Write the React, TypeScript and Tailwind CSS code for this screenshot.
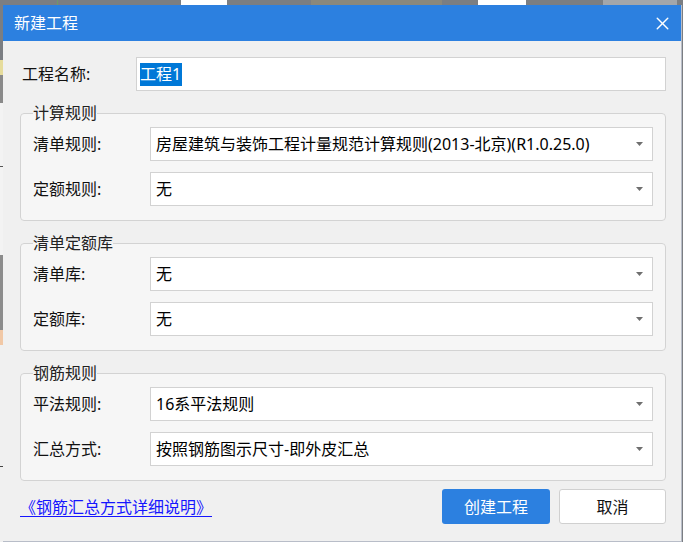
import { X } from "lucide-react";

const font = "font-['Noto_Sans','Noto_Sans_CJK_SC',sans-serif]";

function Caret() {
  return (
    <svg width="7" height="4" viewBox="0 0 7 4" className="shrink-0">
      <path d="M0 0H7L3.5 4Z" fill="#6f6f6f" />
    </svg>
  );
}

function Select({ value }: { value: string }) {
  return (
    <div className="flex-1 h-[34px] bg-white border border-[#d2d2d2] flex items-center justify-between pl-[5px] pr-[9px]">
      <span className="text-[16px] leading-[20px] text-black">{value}</span>
      <Caret />
    </div>
  );
}

function Row({ label, value }: { label: string; value: string }) {
  return (
    <div className="flex items-center">
      <span className="w-[117px] shrink-0 text-[16px] leading-[20px] text-[#111]">{label}</span>
      <Select value={value} />
    </div>
  );
}

function Group({ title, rows }: { title: string; rows: [string, string][] }) {
  return (
    <fieldset className="border border-[#d3d3d3] rounded-[4px] bg-[#f6f6f6] px-3 pt-1 pb-[14px]">
      <legend className="text-[16px] leading-[20px] text-[#222]">{title}</legend>
      <div className="flex flex-col gap-[11px]">
        {rows.map(([l, v]) => (
          <Row key={l} label={l} value={v} />
        ))}
      </div>
    </fieldset>
  );
}

export default function App() {
  return (
    <div className={`w-[683px] h-[542px] bg-[#7b7e82] flex flex-col overflow-hidden ${font}`}>
      {/* app behind the dialog */}
      <div className="h-[5px] shrink-0 flex">
        <div className="w-[57px] bg-[#7b7e82]" />
        <div className="w-[1px] bg-[#6e9a6a]" />
        <div className="w-[123px] bg-[#7b7e82]" />
        <div className="w-[46px] bg-white" />
        <div className="w-[84px] bg-[#7b7e82]" />
        <div className="w-[131px] bg-[#8a887c]" />
        <div className="w-[36px] bg-[#7b7e82]" />
        <div className="w-[48px] bg-white" />
        <div className="w-[77px] bg-[#7b7e82]" />
        <div className="w-[74px] bg-[#a3a6aa]" />
        <div className="flex-1 bg-[#7b7e82]" />
      </div>

      <div className="flex flex-1">
        <div className="w-[3px] shrink-0 flex flex-col">
          <div className="h-[55px] bg-[#7b7e82]" />
          <div className="h-[15px] bg-[#e6dc9c]" />
          <div className="h-[28px] bg-[#8a8a8a]" />
          <div className="h-[63px] bg-[#f3f3f3]" />
          <div className="h-[1px] bg-[#555]" />
          <div className="h-[88px] bg-[#f3f3f3]" />
          <div className="h-[75px] bg-[#8c8c8c]" />
          <div className="h-[15px] bg-[#f1c8a6]" />
          <div className="h-[121px] bg-[#f0f0f0]" />
          <div className="h-[1px] bg-[#444]" />
          <div className="flex-1 bg-[#f0f0f0]" />
        </div>

        <div className="w-[679px] shrink-0 flex flex-col bg-[#f0f0f0] border-r border-b border-[#b8bdc8]">
          <div className="h-[36px] shrink-0 bg-[#2c80e0] flex items-center justify-between pl-[11px] pr-[8px]">
            <span className="text-white text-[16px] leading-[20px]">新建工程</span>
            <X className="size-[21px] text-white" strokeWidth={1.6} />
          </div>

          <div className="flex-1 flex flex-col gap-3 pt-4 pl-[17px] pr-[15px]">
            <div className="flex items-center">
              <span className="w-[116px] shrink-0 pl-[2px] text-[16px] leading-[20px] text-[#111]">工程名称:</span>
              <div className="flex-1 h-[34px] bg-white border border-[#d2d2d2] flex items-center pl-[3px]">
                <span className="bg-[#0078d7] text-white text-[16px] leading-[23px] pr-[1px]">工程1</span>
              </div>
            </div>

            <Group
              title="计算规则"
              rows={[
                ["清单规则:", "房屋建筑与装饰工程计量规范计算规则(2013-北京)(R1.0.25.0)"],
                ["定额规则:", "无"],
              ]}
            />
            <Group
              title="清单定额库"
              rows={[
                ["清单库:", "无"],
                ["定额库:", "无"],
              ]}
            />
            <Group
              title="钢筋规则"
              rows={[
                ["平法规则:", "16系平法规则"],
                ["汇总方式:", "按照钢筋图示尺寸-即外皮汇总"],
              ]}
            />

            <div className="flex items-center justify-between -mt-1">
              <a href="#" className="text-[16px] leading-[20px] text-[#1515ff] underline underline-offset-[3px]">
                《钢筋汇总方式详细说明》
              </a>
              <div className="flex gap-[9px]">
                <button className="w-[108px] h-[35px] rounded-[3px] bg-[#2c80e0] text-white text-[16px]">创建工程</button>
                <button className="w-[107px] h-[35px] rounded-[3px] bg-white border border-[#d0d0d0] text-[#111] text-[16px]">取消</button>
              </div>
            </div>
          </div>
        </div>
        <div className="flex-1 bg-[#7b7e82]" />
      </div>
    </div>
  );
}
